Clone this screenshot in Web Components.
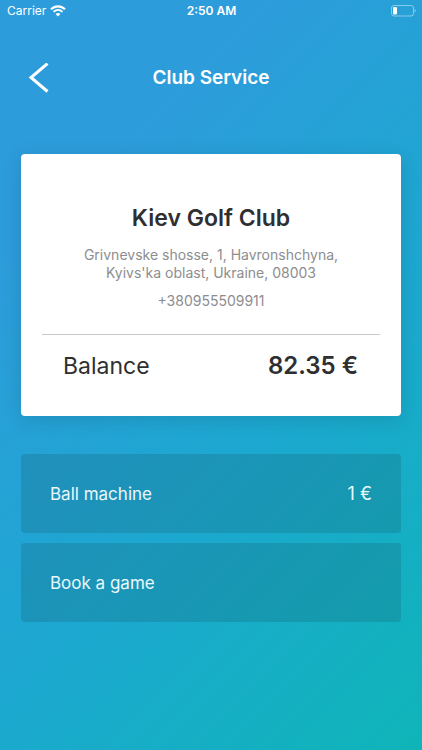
<!DOCTYPE html>
<html lang="en">
<head>
<meta charset="utf-8">
<meta name="viewport" content="width=device-width, initial-scale=1">
<title>Club Service</title>
<style>
html, body { margin: 0; min-height: 100%; }
body { font-family: Inter, "Liberation Sans", sans-serif; color: #fff; }
</style>
</head>
<body>
<club-screen>
  <status-bar slot="status" carrier="Carrier" time="2:50 AM"></status-bar>
  <nav-header slot="header">Club Service</nav-header>
  <club-card>
    <span slot="name">Kiev Golf Club</span>
    <span slot="address">Grivnevske shosse, 1, Havronshchyna,<br>Kyivs'ka oblast, Ukraine, 08003</span>
    <span slot="phone">+380955509911</span>
    <span slot="balance">82.35 €</span>
  </club-card>
  <service-list>
    <service-item>Ball machine<span slot="price">1 €</span></service-item>
    <service-item>Book a game</service-item>
  </service-list>
</club-screen>
<script>
const define = (name, html) => customElements.define(name, class extends HTMLElement {
  constructor() {
    super();
    const template = document.createElement('template');
    template.innerHTML = html;
    this.attachShadow({ mode: 'open' }).append(template.content.cloneNode(true));
  }
  connectedCallback() {
    for (const el of this.shadowRoot.querySelectorAll('[data-from]')) {
      el.textContent = this.getAttribute(el.dataset.from) || '';
    }
  }
});

define('club-screen', `
  <style>
    :host { display: flex; flex-direction: column; min-height: 100vh;
      background: linear-gradient(135deg, #2d9cdb 0%, #2d9cdb 22%, #1ca8d0 60%, #0fb4b9 98%); }
    main { display: flex; flex-direction: column; gap: 38px; padding: 43px 21px 40px; }
  </style>
  <slot name="status"></slot>
  <slot name="header"></slot>
  <main><slot></slot></main>
`);

define('status-bar', `
  <style>
    :host { display: grid; grid-template-columns: 1fr auto 1fr; align-items: center;
      height: 22px; padding: 0 6px 0 7px; font-size: 12px; line-height: 22px; }
    .left { display: flex; align-items: center; gap: 4px; }
    .time { font-weight: 600; }
    .battery { justify-self: end; }
    svg { display: block; }
  </style>
  <div class="left"><span data-from="carrier"></span>
    <svg width="16" height="12" viewBox="0 0 16 12" fill="none" stroke="#fff" aria-hidden="true">
      <path d="M1 4.3C5 0.3 11 0.3 15 4.3" stroke-width="2.3"/>
      <path d="M3.6 6.9C6.2 4.4 9.8 4.4 12.4 6.9" stroke-width="2"/>
      <path d="M8 11.4L5.6 9C7 7.7 9 7.7 10.4 9Z" fill="#fff" stroke="none"/>
    </svg>
  </div>
  <span class="time" data-from="time"></span>
  <svg class="battery" width="25" height="12" viewBox="0 0 25 12" role="img" aria-label="Battery low">
    <rect x=".5" y=".5" width="22" height="10.5" rx="2.5" fill="none" stroke="#fff" stroke-opacity=".45"/>
    <rect x="2" y="2" width="4" height="7.5" rx="1" fill="#fff"/>
    <path d="M23.7 4v3.6c1.2-.6 1.2-3 0-3.6Z" fill="#fff" fill-opacity=".6"/>
  </svg>
`);

define('nav-header', `
  <style>
    :host { display: grid; grid-template-columns: 1fr auto 1fr; align-items: center;
      height: 44px; padding: 34px 22px 11px; }
    button { width: 32px; height: 44px; padding: 0 0 0 6px; border: 0; background: none; color: inherit; cursor: pointer; }
    svg { display: block; }
    h1 { margin: 0; font-size: 19px; line-height: 24px; font-weight: 600; }
  </style>
  <button type="button" aria-label="Back">
    <svg width="22" height="30" viewBox="0 0 22 30" fill="none" stroke="#fff" stroke-width="3" aria-hidden="true">
      <path d="M19.5 .5L3 14.5L19.5 28.5"/>
    </svg>
  </button>
  <h1><slot></slot></h1>
`);

define('club-card', `
  <style>
    :host { display: block; box-sizing: border-box; padding: 48px 21px 34px; border-radius: 4px;
      background: #fff; color: #2f2f31; text-align: center; box-shadow: 0 4px 20px rgba(0, 0, 0, .12); }
    h2 { margin: 0 0 12px; font-size: 23px; line-height: 32px; font-weight: 600; }
    p { margin: 0; font-size: 14px; line-height: 18px; color: #8d8d8f; }
    .phone { margin: 10px 0 24px; }
    .balance { display: flex; justify-content: space-between; padding: 15px 22px 0 21px;
      border-top: 1px solid #c9c9cb; font-size: 23px; line-height: 32px; }
    strong { font-size: 24px; font-weight: 600; }
  </style>
  <h2><slot name="name"></slot></h2>
  <p><slot name="address"></slot></p>
  <p class="phone"><slot name="phone"></slot></p>
  <div class="balance"><span>Balance</span><strong><slot name="balance"></slot></strong></div>
`);

define('service-list', `
  <style>:host { display: flex; flex-direction: column; gap: 10px; }</style>
  <slot></slot>
`);

define('service-item', `
  <style>
    :host { display: block; }
    button { display: flex; justify-content: space-between; align-items: center; width: 100%;
      min-height: 79px; padding: 0 29px; border: 0; border-radius: 4px;
      background: rgba(22, 88, 104, .23); color: #e9f8fc; font: inherit; font-size: 17px; line-height: 24px;
      text-align: left; cursor: pointer; }
    .price { font-size: 18px; }
  </style>
  <button type="button"><span><slot></slot></span><span class="price"><slot name="price"></slot></span></button>
`);
</script>
</body>
</html>
